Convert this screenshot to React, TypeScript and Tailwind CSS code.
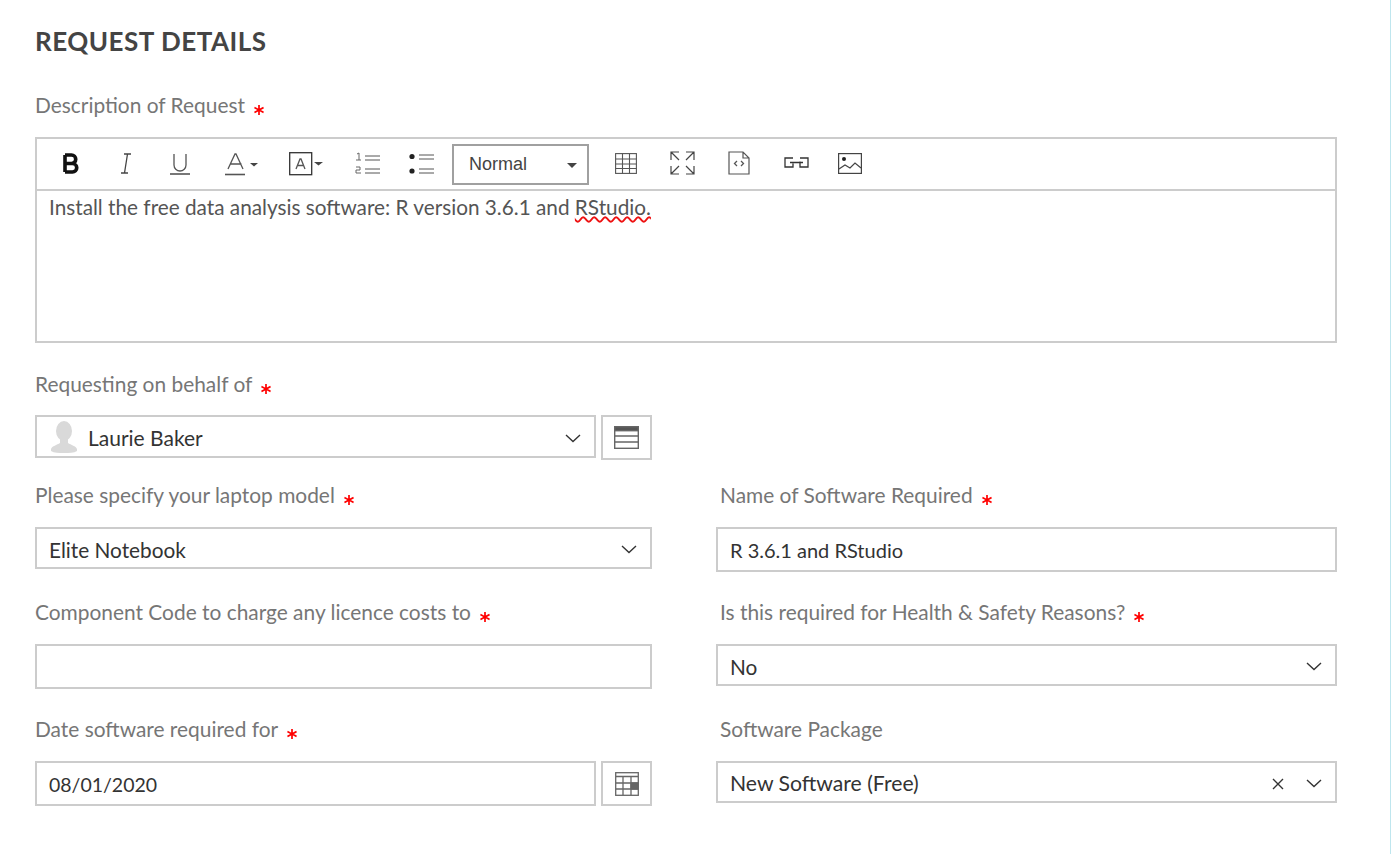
import React from "react"

const Chevron = () => (
    <svg className="mt-[3px]" width="16" height="9" viewBox="0 0 16 9" fill="none" stroke="#333" strokeWidth="1.4">
        <path d="M1 1l7 6.5L15 1" />
    </svg>
)

const Star = () => (
    <svg className="ml-[9px] mt-[10px]" width="10" height="10" viewBox="0 0 10 10" stroke="#f00" strokeWidth="1.7" strokeLinecap="square">
        <path d="M5 .8v8.4M1.2 2.9l7.6 4.2M8.8 2.9L1.2 7.1" />
    </svg>
)

const Label = ({ text, required = true, className = "" }: { text: string; required?: boolean; className?: string }) => (
    <div className={`h-6 mb-[19px] pb-[2px] flex items-center text-[20.9px] leading-6 text-[#767676] whitespace-nowrap ${className}`}>
        <span>{text}</span>
        {required && <Star />}
    </div>
)

const Field = ({ children, tall = false, className = "" }: { children?: React.ReactNode; tall?: boolean; className?: string }) => (
    <div className={`${tall ? "h-[45px]" : "h-[42px]"} border-2 border-[#ccc] bg-white flex items-center pl-3 pr-[13px] text-[20.8px] text-[#333] ${className}`}>
        {children}
    </div>
)

const SelectField = ({ value, clear = false, textClass = "" }: { value: string; clear?: boolean; textClass?: string }) => (
    <Field>
        <span className={`flex-1 pt-[3px] ${textClass}`}>{value}</span>
        {clear && (
            <svg className="mr-[22px] mt-[3px]" width="12" height="12" viewBox="0 0 12 12" stroke="#333" strokeWidth="1.4">
                <path d="M1 1l10 10M11 1L1 11" />
            </svg>
        )}
        <Chevron />
    </Field>
)

const ToolIcon = ({ w, children, className = "" }: { w: number; children: React.ReactNode; className?: string }) => (
    <div className={`shrink-0 flex items-center justify-center ${className}`} style={{ width: w }}>
        {children}
    </div>
)

const Toolbar = () => (
    <div className="h-[52px] flex items-center border-b-2 border-[#ccc]">
        <ToolIcon w={24} className="ml-[22px] mb-[2px]">
            <svg width="18" height="21" viewBox="0 0 18 21" fill="none" stroke="#111" strokeWidth="3.6">
                <path d="M3 2v17M3 2h6.500a4 4 0 010 8.500H3M3 10.500h7.500a4 4 0 010 8.500H3" />
            </svg>
        </ToolIcon>
        <ToolIcon w={20} className="ml-[33px] mb-[2px]">
            <svg width="12" height="21" viewBox="0 0 12 21" fill="none" stroke="#444" strokeWidth="1.3">
                <path d="M4 1h7M1 20h7M7.500 1L4.500 20" />
            </svg>
        </ToolIcon>
        <ToolIcon w={20} className="ml-[34px]">
            <svg width="20" height="22" viewBox="0 0 20 22" fill="none" stroke="#555" strokeWidth="1.3">
                <path d="M4 1v11a6 6 0 0012 0V1" />
                <path d="M0 21h20" strokeWidth="1.6" />
            </svg>
        </ToolIcon>
        <ToolIcon w={36} className="ml-[35px]">
            <svg width="36" height="24" viewBox="0 0 36 24" fill="none">
                <path d="M3 17L10 2h1l7 15M5.500 12h11" stroke="#555" strokeWidth="1.3" />
                <path d="M0 22.500h20" stroke="#555" strokeWidth="1.6" />
                <path d="M25 11h8l-4 3.500z" fill="#444" />
            </svg>
        </ToolIcon>
        <ToolIcon w={35} className="ml-[28px]">
            <svg width="35" height="24" viewBox="0 0 35 24" fill="none">
                <rect x=".7" y=".7" width="22" height="22" stroke="#333" strokeWidth="1.3" />
                <path d="M7 17l4-10h1l4 10M8.500 13.500h6" stroke="#555" strokeWidth="1.3" />
                <path d="M25 10h9l-4.500 3.500z" fill="#444" />
            </svg>
        </ToolIcon>
        <ToolIcon w={26} className="ml-[30px]">
            <svg width="26" height="24" viewBox="0 0 26 24" fill="none" stroke="#555">
                <path d="M11 4h15M11 8h15M11 17h15M11 21h15" strokeWidth="1" />
                <path d="M3 2l2-1v7M2 8h5M2 15h4v3H2v3h5" stroke="#666" strokeWidth="1" />
            </svg>
        </ToolIcon>
        <ToolIcon w={25} className="ml-[29px]">
            <svg width="25" height="24" viewBox="0 0 25 24" fill="none">
                <circle cx="3" cy="4.500" r="2.600" fill="#222" />
                <circle cx="3" cy="19" r="2.600" fill="#222" />
                <path d="M10 3h15M10 7h15M10 17h15M10 21h15" stroke="#555" />
            </svg>
        </ToolIcon>
        <div className="ml-[18px] w-[137px] h-[41px] shrink-0 border-2 border-[#a0a0a0] flex items-center pl-[15px] pr-[10px] font-['Liberation_Sans',sans-serif] text-[18px] text-[#444]">
            <span className="flex-1">Normal</span>
            <svg className="mt-[2px]" width="10" height="5" viewBox="0 0 10 5"><path d="M0 0h10L5 5z" fill="#444" /></svg>
        </div>
        <ToolIcon w={22} className="ml-[26px] mb-[2px]">
            <svg width="22" height="21" viewBox="0 0 22 21" fill="none" stroke="#555" strokeWidth="1.1">
                <rect x=".6" y=".6" width="20.800" height="19.800" />
                <path d="M.6 6h20.800M.6 11h20.800M.6 15.500h20.800M7.500.6v19.800M14.500.6v19.800" />
            </svg>
        </ToolIcon>
        <ToolIcon w={25} className="ml-[33px] mb-[2px]">
            <svg width="25" height="24" viewBox="0 0 25 24" fill="none" stroke="#444" strokeWidth="1.2">
                <path d="M1 9V1h8M24 9V1h-8M1 15v8h8M24 15v8h-8M1 1l8 8M24 1l-8 8M1 23l8-8M24 23l-8-8" />
            </svg>
        </ToolIcon>
        <ToolIcon w={22} className="ml-[33px] mb-[2px]">
            <svg width="22" height="24" viewBox="0 0 22 24" fill="none" stroke="#555" strokeWidth="1.2">
                <path d="M1 1h14l6 6v16H1zM15 1v6h6" />
                <path d="M9 10l-2.500 2.500L9 15M13 10l2.500 2.500L13 15" strokeWidth="1.300" />
            </svg>
        </ToolIcon>
        <ToolIcon w={25} className="ml-[34px] mb-[3px]">
            <svg width="25" height="11" viewBox="0 0 25 11" fill="none" stroke="#333" strokeWidth="1.3">
                <path d="M9 1H1v9h8V6.500M16 1h8v9h-8V4.500M6 5.500h13" />
            </svg>
        </ToolIcon>
        <ToolIcon w={24} className="ml-[29px] mb-[2px]">
            <svg width="24" height="21" viewBox="0 0 24 21" fill="none" stroke="#444" strokeWidth="1.2">
                <rect x=".6" y=".6" width="22.800" height="19.800" />
                <circle cx="6" cy="6" r="2" fill="#222" stroke="none" />
                <path d="M1 16l6-4 5 3 5-5 6 5" />
            </svg>
        </ToolIcon>
    </div>
)

const App: React.FC = () => {
    return (
        <div className="h-[854px] bg-white border-r border-[#bfe6ee] pl-[35px] pt-[26px] font-['Lato','Noto_Sans',sans-serif] overflow-hidden">
            <h1 className="h-[30px] mb-[38px] text-[26px] tracking-[0.5px] leading-[30px] font-bold text-[#444]">REQUEST DETAILS</h1>

            <Label text="Description of Request" />
            <div className="w-[1302px] h-[206px] border-2 border-[#ccc]">
                <Toolbar />
                <div className="pl-3 pt-[2px] text-[20.75px] leading-7 text-[#555]">
                    Install the free data analysis software: R version 3.6.1 and{" "}
                    <span className="underline decoration-wavy decoration-[#e11] decoration-[1.5px]">RStudio.</span>
                </div>
            </div>

            <div className="mt-[30px]">
                <Label text="Requesting on behalf of" className="!mb-[18px]" />
                <div className="flex gap-[5px] items-start w-[617px]">
                    <Field className="flex-1 !h-[43px] pl-[14px]">
                        <svg width="26" height="32" viewBox="0 0 26 32" fill="#d9d9d9" className="mr-[11px]">
                            <ellipse cx="13" cy="10" rx="8" ry="10" />
                            <path d="M9 18h8v4c3 2 8 3 9 6v2c-3 2-8 2-13 2s-10 0-13-2v-2c1-3 6-4 9-6z" />
                        </svg>
                        <span className="flex-1 pt-[3px] text-[21px]">Laurie Baker</span>
                        <Chevron />
                    </Field>
                    <div className="w-[51px] h-[45px] border-2 border-[#ccc] flex items-center justify-center">
                        <svg width="25" height="23" viewBox="0 0 25 23" fill="none" stroke="#666" strokeWidth="1.4">
                            <rect x=".7" y=".7" width="23.600" height="21.600" />
                            <rect x=".7" y=".7" width="23.600" height="4" fill="#555" />
                            <path d="M1 10h23M1 16h23" />
                        </svg>
                    </div>
                </div>
            </div>

            <div className="mt-6 grid grid-cols-[617px_621px] gap-x-16 gap-y-[29px]">
                <div>
                    <Label text="Please specify your laptop model" />
                    <SelectField value="Elite Notebook" />
                </div>
                <div>
                    <Label text="Name of Software Required" className="pl-1" />
                    <Field tall><span className="pt-[1px] text-[20px]">R 3.6.1 and RStudio</span></Field>
                </div>
                <div>
                    <Label text="Component Code to charge any licence costs to" />
                    <Field tall />
                </div>
                <div>
                    <Label text="Is this required for Health & Safety Reasons?" className="pl-1" />
                    <SelectField value="No" />
                </div>
                <div>
                    <Label text="Date software required for" />
                    <div className="flex gap-[5px]">
                        <Field tall className="flex-1"><span className="pt-[3px] text-[19.5px]">08/01/2020</span></Field>
                        <div className="w-[51px] h-[45px] border-2 border-[#ccc] flex items-center justify-center">
                            <svg width="24" height="24" viewBox="0 0 24 24" fill="none" stroke="#666" strokeWidth="1.3">
                                <rect x=".7" y=".7" width="22.600" height="22.600" />
                                <rect x="16" y="11" width="7" height="6" fill="#666" />
                                <path d="M1 4.500h22M1 11h22M1 17h22M8 5v18M16 5v18" />
                            </svg>
                        </div>
                    </div>
                </div>
                <div>
                    <Label text="Software Package" required={false} className="pl-1" />
                    <SelectField value="New Software (Free)" clear textClass="text-[21.2px]" />
                </div>
            </div>
        </div>
    )
}

export default App
